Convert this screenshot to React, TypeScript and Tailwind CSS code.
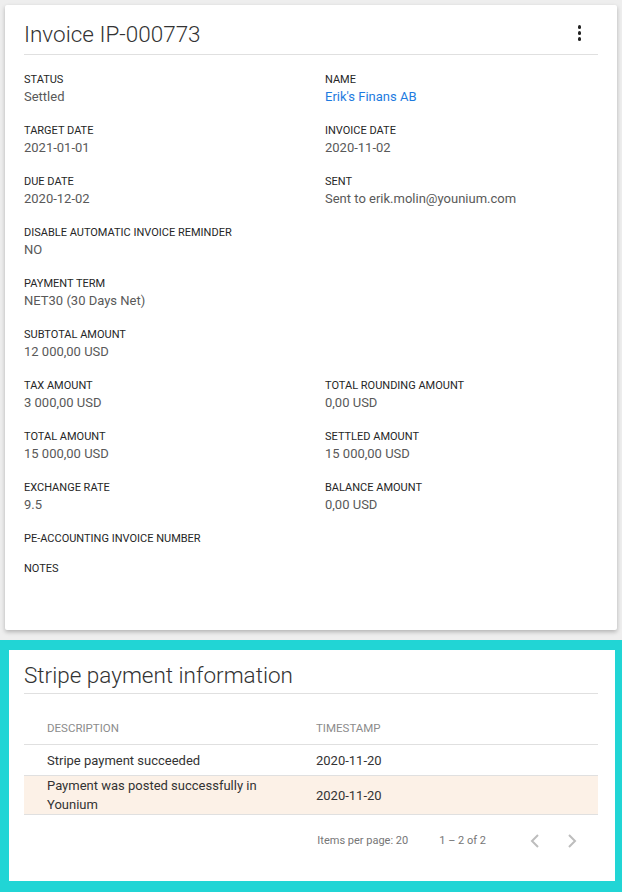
import React from 'react';

type Field = { label: string; value?: string; link?: boolean };

const rows: [Field, Field | null][] = [
    [{ label: 'Status', value: 'Settled' }, { label: 'Name', value: "Erik's Finans AB", link: true }],
    [{ label: 'Target date', value: '2021-01-01' }, { label: 'Invoice date', value: '2020-11-02' }],
    [{ label: 'Due date', value: '2020-12-02' }, { label: 'Sent', value: 'Sent to erik.molin@younium.com' }],
    [{ label: 'Disable automatic invoice reminder', value: 'NO' }, null],
    [{ label: 'Payment term', value: 'NET30 (30 Days Net)' }, null],
    [{ label: 'Subtotal amount', value: '12 000,00 USD' }, null],
    [{ label: 'Tax amount', value: '3 000,00 USD' }, { label: 'Total rounding amount', value: '0,00 USD' }],
    [{ label: 'Total amount', value: '15 000,00 USD' }, { label: 'Settled amount', value: '15 000,00 USD' }],
    [{ label: 'Exchange rate', value: '9.5' }, { label: 'Balance amount', value: '0,00 USD' }],
    [{ label: 'PE-accounting invoice number' }, null],
    [{ label: 'Notes' }, null],
];

const events = [
    { desc: 'Stripe payment succeeded', time: '2020-11-20', highlight: false },
    { desc: 'Payment was posted successfully in Younium', time: '2020-11-20', highlight: true },
];

function FieldCell({ field }: { field: Field | null }) {
    if (!field) return <div />;
    return (
        <div>
            <div className="text-[11px] leading-[16px] uppercase text-[#262626]">{field.label}</div>
            {field.value && (
                <div className={`text-[13px] leading-[18px] ${field.link ? 'text-[#1e7be0]' : 'text-[#595959]'}`}>
                    {field.value}
                </div>
            )}
        </div>
    );
}

export default function App() {
    return (
        <div className="min-h-[892px] w-[622px] bg-[#eeeeee] pt-[5px] font-['Roboto',sans-serif] overflow-hidden">
            {/* Invoice card */}
            <div className="mx-[5px] w-[612px] bg-white rounded-[2px] shadow-[0_2px_4px_rgba(0,0,0,0.25)] px-[19px] pt-[13px] pb-[39px]">
                <div className="flex items-center justify-between border-b border-[#e0e0e0] pb-[4px]">
                    <h1 className="text-[22.5px] leading-[32px] font-light text-[#333]">Invoice IP-000773</h1>
                    <div className="flex flex-col items-center gap-[2.5px] mr-[17px] mt-[-2px]">
                        <span className="w-[3.5px] h-[3.5px] rounded-full bg-[#222]" />
                        <span className="w-[3.5px] h-[3.5px] rounded-full bg-[#222]" />
                        <span className="w-[3.5px] h-[3.5px] rounded-full bg-[#222]" />
                    </div>
                </div>
                <div className="pt-[17px]">
                    {rows.map(([l, r], i) => (
                        <div
                            key={i}
                            className={`grid grid-cols-[301px_1fr] ${l.value ? 'pb-[17px]' : 'pb-[14px]'}`}
                        >
                            <FieldCell field={l} />
                            <FieldCell field={r} />
                        </div>
                    ))}
                </div>
            </div>

            {/* Stripe payment card */}
            <div className="mt-[10px] bg-[#21d5d5] pl-[9px] pr-[7px] pt-[10px] pb-[11px]">
                <div className="bg-white pl-[15px] pr-[17px] pt-[9px] pb-[14px]">
                    <div className="border-b border-[#e0e0e0] pb-[2px]">
                        <h2 className="text-[22.5px] leading-[32px] font-light text-[#333]">Stripe payment information</h2>
                    </div>
                    <div className="grid grid-cols-[292px_1fr] h-[51px] items-end pb-[8px] border-b border-[#e0e0e0] text-[11.5px] leading-[16px] uppercase text-[#8c8c8c]">
                        <div className="pl-[23px]">Description</div>
                        <div>Timestamp</div>
                    </div>
                    {events.map((e) => (
                        <div
                            key={e.desc}
                            className={`grid grid-cols-[292px_1fr] items-center border-b border-[#e0e0e0] text-[13px] leading-[19px] text-[#333] ${e.highlight ? 'h-[39px] bg-[#fcf1e7]' : 'h-[31px]'}`}
                        >
                            <div className="pl-[23px] pr-[24px]">{e.desc}</div>
                            <div>{e.time}</div>
                        </div>
                    ))}
                    <div className="flex items-center justify-end h-[52px] pr-[21px] text-[11px] text-[#767676]">
                        <span>Items per page: 20</span>
                        <span className="ml-[31px]">1 – 2 of 2</span>
                        <svg className="ml-[44px]" width="10" height="16" viewBox="0 0 10 16" fill="none">
                            <polyline points="8,2 2,8 8,14" stroke="#bdbdbd" strokeWidth="2" />
                        </svg>
                        <svg className="ml-[27px]" width="10" height="16" viewBox="0 0 10 16" fill="none">
                            <polyline points="2,2 8,8 2,14" stroke="#bdbdbd" strokeWidth="2" />
                        </svg>
                    </div>
                </div>
            </div>
        </div>
    );
}
